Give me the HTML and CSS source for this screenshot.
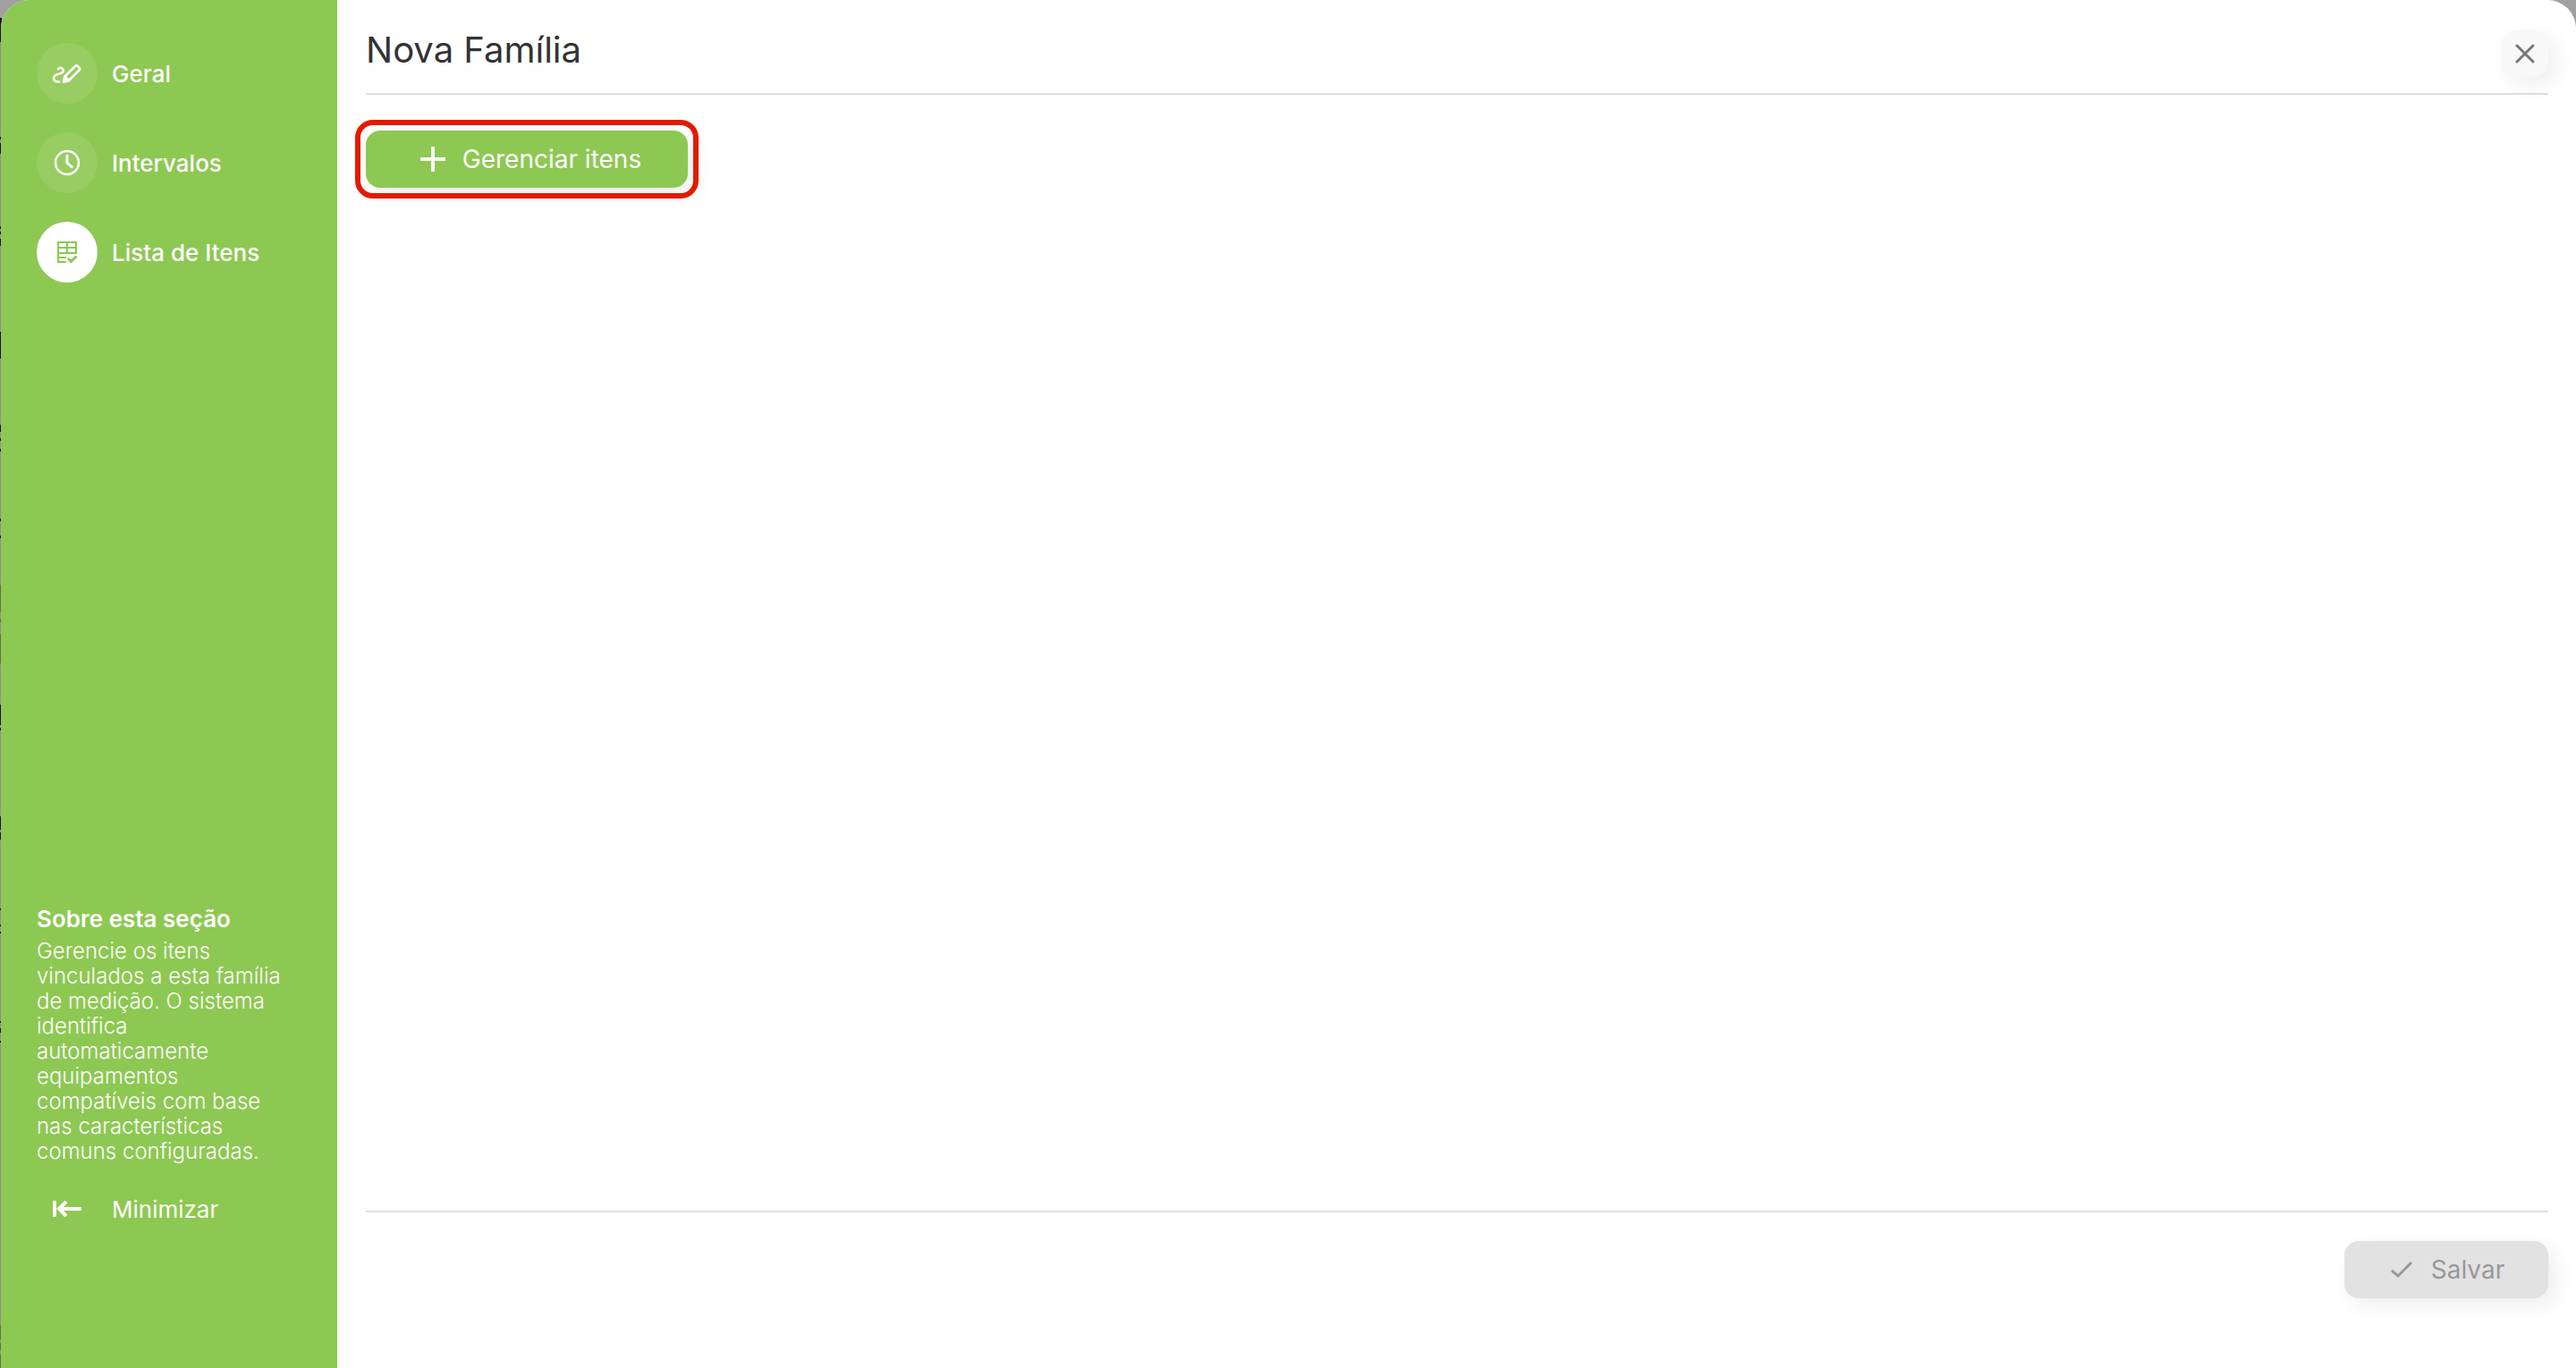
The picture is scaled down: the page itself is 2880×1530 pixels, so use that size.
FILE: index.html
```html
<!DOCTYPE html>
<html lang="pt-BR">
<head>
  <meta charset="utf-8">
  <meta name="viewport" content="width=device-width, initial-scale=1">
  <title>Nova Família</title>
  <link rel="stylesheet" href="styles.css">
</head>
<body>
  <div class="backdrop">
    <div class="dialog" role="dialog" aria-labelledby="dialog-title">
      <aside class="sidebar">
        <nav class="nav">
          <a class="nav-item" href="#geral">
            <span class="nav-icon">
              <svg width="34" height="34" viewBox="0 0 34 34" fill="none" stroke="currentColor" stroke-width="2.500" stroke-linecap="round" stroke-linejoin="round">
                <path d="M7 12C10 10 13 11.500 13 14C13 19 2 16.500 2 22C2 25 4.500 26.500 8 26.500"/>
                <path d="M14.500 20.500L26 9Q27.500 7.500 29 9L30.500 10.500Q32 12 30.500 13.500L19 25L13 26.500Z"/>
                <path d="M14.500 20.500L19 25L13 26.500Z" fill="currentColor"/>
              </svg>
            </span>
            <span>Geral</span>
          </a>
          <a class="nav-item" href="#intervalos">
            <span class="nav-icon">
              <svg width="30" height="30" viewBox="0 0 30 30" fill="none" stroke="currentColor" stroke-width="2.500">
                <circle cx="15" cy="15" r="13"/>
                <path d="M15 6V15L21 20.500" stroke-width="3"/>
              </svg>
            </span>
            <span>Intervalos</span>
          </a>
          <a class="nav-item nav-item-active" href="#lista" aria-current="page">
            <span class="nav-icon">
              <svg width="24" height="26" viewBox="0 0 24 26" fill="none" stroke="currentColor" stroke-width="2">
                <path d="M11 24H2V2H22V14H2M2 8H22M12 2V14M2 19H11"/>
                <path d="M13 20L16.500 23.500L22.500 17.500" stroke-width="3"/>
              </svg>
            </span>
            <span>Lista de Itens</span>
          </a>
        </nav>
        <section class="about">
          <h2 class="about-title">Sobre esta seção</h2>
          <p class="about-text">Gerencie os itens vinculados a esta família de medição. O sistema identifica automaticamente equipamentos compatíveis com base nas características comuns configuradas.</p>
        </section>
        <button class="minimize" type="button">
          <span class="minimize-icon">
            <svg width="34" height="20" viewBox="0 0 34 20" fill="none" stroke="currentColor" stroke-width="4">
              <path d="M3 1V19M33 10H8M16 2L8 10L16 18"/>
            </svg>
          </span>
          <span>Minimizar</span>
        </button>
      </aside>
      <main class="content">
        <header class="header">
          <h1 class="title" id="dialog-title">Nova Família</h1>
          <button class="close" type="button" aria-label="Fechar">
            <svg width="22" height="22" viewBox="0 0 22 22" fill="none" stroke="currentColor" stroke-width="3" stroke-linecap="round">
              <path d="M2 2L20 20M20 2L2 20"/>
            </svg>
          </button>
        </header>
        <div class="body">
          <button class="button manage" type="button">
            <svg width="30" height="30" viewBox="0 0 30 30" fill="none" stroke="currentColor" stroke-width="4">
              <path d="M15 1V29M1 15H29"/>
            </svg>
            <span>Gerenciar itens</span>
          </button>
        </div>
        <footer class="footer">
          <button class="button save" type="button" disabled>
            <svg width="26" height="20" viewBox="0 0 26 20" fill="none" stroke="currentColor" stroke-width="3">
              <path d="M2 11L9 17L24 2"/>
            </svg>
            <span>Salvar</span>
          </button>
        </footer>
      </main>
    </div>
  </div>
</body>
</html>
```
FILE: styles.css
```css
:root {
  --green: #8dc852;
  --line: #e0e0e0;
  --shade: #928e96;
  --ink: #17161a;
  --moss: #587a38;
}

* {
  box-sizing: border-box;
}

body {
  margin: 0;
  font-family: Inter, "Liberation Sans", sans-serif;
  font-size: 26px;
  color: #333;
}

button {
  border: 0;
  padding: 0;
  background: none;
  color: inherit;
  font: inherit;
}

h1, h2, p {
  margin: 0;
}

svg {
  display: block;
  flex: none;
}

/* The dimmed page shows as a thin sliver left of the dialog */
.backdrop {
  min-height: 100vh;
  display: flex;
  padding-left: 1px;
  background-color: #a0a09e;
  background-image: linear-gradient(
    #a0a09e 20px,
    var(--ink) 20px 47px, var(--shade) 47px 153px,
    var(--ink) 153px 156px, var(--shade) 156px 160px,
    var(--ink) 160px 172px, var(--shade) 172px 253px,
    var(--ink) 253px 256px, var(--shade) 256px 259px,
    var(--ink) 259px 262px, var(--shade) 262px 267px,
    var(--ink) 267px 275px, var(--shade) 275px 371px,
    var(--ink) 371px 401px, var(--shade) 401px 475px,
    var(--ink) 475px 483px, var(--shade) 483px 490px,
    var(--ink) 490px 493px, var(--shade) 493px 502px,
    var(--ink) 502px 505px, var(--shade) 505px 580px,
    var(--ink) 580px 583px, var(--shade) 583px 599px,
    var(--ink) 599px 602px, var(--shade) 602px 654px,
    var(--moss) 654px 684px, var(--shade) 684px 692px,
    var(--moss) 692px 696px, var(--shade) 696px 709px,
    var(--moss) 709px 742px, var(--shade) 742px 788px,
    var(--ink) 788px 811px, var(--shade) 811px 814px,
    var(--ink) 814px 817px, var(--shade) 817px 913px,
    var(--ink) 913px 928px, var(--shade) 928px 931px,
    var(--ink) 931px 939px, var(--shade) 939px 1016px,
    var(--ink) 1016px 1018px, var(--shade) 1018px 1034px,
    var(--ink) 1034px 1036px, var(--shade) 1036px 1042px,
    var(--ink) 1042px 1044px, var(--shade) 1044px 1142px,
    var(--ink) 1142px 1144px, var(--shade) 1144px 1150px,
    var(--ink) 1150px 1155px, var(--shade) 1155px 1164px,
    var(--ink) 1164px 1166px, var(--shade) 1166px 1482px,
    var(--moss) 1482px 1498px, var(--shade) 1498px 1502px,
    var(--moss) 1502px 1510px, var(--shade) 1510px 1515px,
    var(--moss) 1515px
  );
  background-size: 2px 100%;
  background-repeat: no-repeat;
}

.dialog {
  flex: 1;
  display: flex;
  overflow: hidden;
  border-radius: 32px 32px 0 0;
  background: #fff;
}

.sidebar {
  flex: none;
  width: 376px;
  display: flex;
  flex-direction: column;
  padding: 48px 40px 144px;
  background: var(--green);
  color: #fff;
}

.nav {
  display: flex;
  flex-direction: column;
  gap: 32px;
}

.nav-item {
  display: flex;
  align-items: center;
  gap: 16px;
  color: #fff;
  font-weight: 500;
  text-decoration: none;
}

.nav-icon {
  width: 68px;
  height: 68px;
  display: flex;
  align-items: center;
  justify-content: center;
  border-radius: 50%;
  background: rgba(255, 255, 255, 0.1);
}

.nav-item-active .nav-icon {
  background: #fff;
  color: var(--green);
}

.about {
  margin-top: auto;
}

.about-title {
  margin-bottom: 6px;
  font-size: 26px;
  font-weight: 600;
  line-height: 32px;
}

.about-text {
  font-size: 24px;
  font-weight: 300;
  line-height: 28px;
}

.minimize {
  display: flex;
  align-items: center;
  gap: 16px;
  height: 68px;
  margin-top: 16px;
  font-weight: 400;
}

.minimize-icon {
  width: 68px;
  display: flex;
  justify-content: center;
}

.content {
  flex: 1;
  display: flex;
  flex-direction: column;
  padding: 0 31px 0 32px;
}

.header {
  display: flex;
  justify-content: space-between;
  height: 106px;
  border-bottom: 2px solid var(--line);
}

.title {
  padding-top: 32px;
  font-size: 40px;
  font-weight: 400;
  line-height: 48px;
}

.close {
  width: 52px;
  height: 52px;
  display: flex;
  align-items: center;
  justify-content: center;
  margin-top: 34px;
  border-radius: 16px;
  background: #f8f8f8;
  color: #777;
  box-shadow: 8px 8px 24px rgba(0, 0, 0, 0.07);
}

.body {
  flex: 1;
  padding-top: 40px;
}

.button {
  height: 64px;
  display: flex;
  align-items: center;
  justify-content: center;
  border-radius: 16px;
  font-size: 28px;
  box-shadow: 8px 8px 24px rgba(0, 0, 0, 0.07);
}

.manage {
  position: relative;
  width: 360px;
  padding-left: 8px;
  gap: 18px;
  background: var(--green);
  color: #fff;
}

/* Highlight ring over the button */
.manage::after {
  content: "";
  position: absolute;
  inset: -12px;
  border: 6px solid #e21b00;
  border-radius: 20px;
}

.footer {
  display: flex;
  justify-content: flex-end;
  padding: 32px 0 78px;
  border-top: 2px solid var(--line);
}

.save {
  width: 228px;
  padding-left: 2px;
  gap: 20px;
  background: #e2e2e2;
  color: #999;
}
```
